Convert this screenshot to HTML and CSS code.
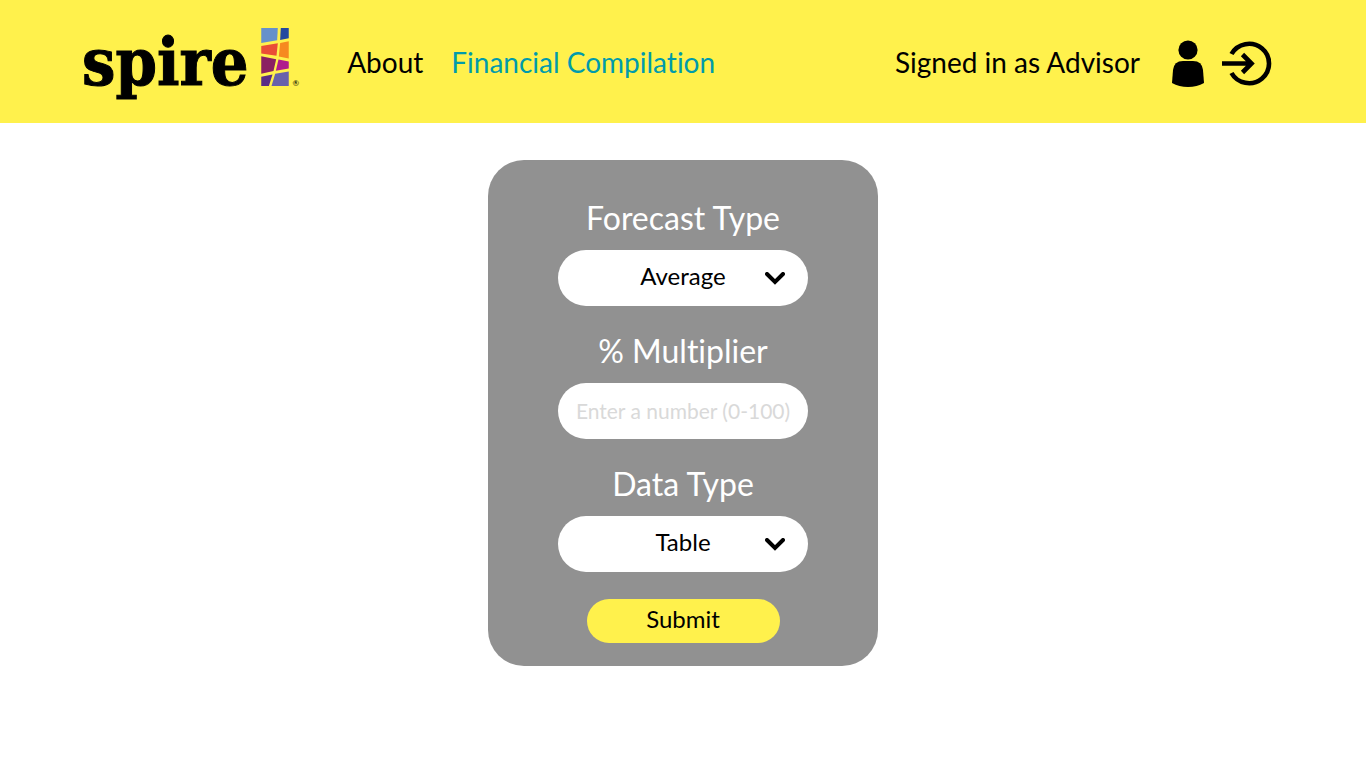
FILE: index.html
```html
<!DOCTYPE html>
<html lang="en">
<head>
<meta charset="utf-8">
<title>Spire – Financial Compilation</title>
<link rel="stylesheet" href="styles.css">
</head>
<body>
<header class="topbar">
  <a class="logo" href="#">
    <span class="logo-word">spire</span>
    <svg class="logo-art" viewBox="0 0 83 175" aria-hidden="true">
      <path fill="#6691cb" d="M0 0H50L48 37 0 45Z"/>
      <path fill="#23489f" d="M59 0H83V31L57 36Z"/>
      <path fill="#ea4e36" d="M0 54 50 46 46 84 0 77Z"/>
      <path fill="#f68a20" d="M57 45 83 40V92L53 86Z"/>
      <path fill="#8b2062" d="M0 85 45 94 37 130 0 138Z"/>
      <path fill="#b01c8c" d="M52 95 83 101V122L44 129Z"/>
      <path fill="#5a2d86" d="M0 147 34 140 23 175H0Z"/>
      <path fill="#6862ab" d="M42 138 83 131V175H31Z"/>
    </svg>
    <span class="logo-mark">®</span>
  </a>
  <nav class="nav">
    <a href="#">About</a>
    <a class="current" href="#" aria-current="page">Financial Compilation</a>
  </nav>
  <div class="account">
    <span class="signed">Signed in as Advisor</span>
    <a class="icon-link" href="#" aria-label="Profile">
      <svg width="32" height="50" viewBox="0 -3 32 50"><circle cx="16" cy="10" r="9.6"/><path d="M11 21H21Q30 21 31 30L32 43Q25 47 16 47T0 43L1 30Q2 21 11 21Z"/></svg>
    </a>
    <a class="icon-link" href="#" aria-label="Sign out">
      <svg width="50" height="48" viewBox="0 -3 50 48" fill="none" stroke="#000" stroke-width="4.6"><path d="M9.500 13A20 19.700 0 1 1 9.500 32"/><path d="M0 22.500H29M20.500 13.500 29.500 22.500 20.500 31.500"/></svg>
    </a>
  </div>
</header>
<main>
  <form class="card">
    <div class="field">
      <label for="forecast">Forecast Type</label>
      <div class="picker">
        <select id="forecast" class="control"><option>Average</option></select>
        <svg class="chevron" viewBox="0 0 20 13" aria-hidden="true"><path d="M2 2 10 10 18 2"/></svg>
      </div>
    </div>
    <div class="field">
      <label for="multiplier">% Multiplier</label>
      <input id="multiplier" class="control" type="text" inputmode="numeric" placeholder="Enter a number (0-100)">
    </div>
    <div class="field">
      <label for="data">Data Type</label>
      <div class="picker">
        <select id="data" class="control"><option>Table</option></select>
        <svg class="chevron" viewBox="0 0 20 13" aria-hidden="true"><path d="M2 2 10 10 18 2"/></svg>
      </div>
    </div>
    <button class="submit" type="submit">Submit</button>
  </form>
</main>
</body>
</html>
```
FILE: styles.css
```css
* {
  box-sizing: border-box;
}

body {
  margin: 0;
  background: #fff;
  color: #000;
  font-family: Lato, "Open Sans", sans-serif;
  font-variant-ligatures: none;
}

a {
  color: inherit;
  text-decoration: none;
}

.topbar {
  display: flex;
  align-items: center;
  min-height: 123px;
  padding: 0 94px 0 82px;
  background: #fff14c;
  font-size: 28px;
  line-height: 36px;
}

.logo {
  display: flex;
  align-items: flex-start;
}

.logo-word {
  font: bold 66px/70px "DejaVu Serif Condensed", "DejaVu Serif", serif;
  -webkit-text-stroke: 1px #000;
}

.logo-art {
  width: 28px;
  height: 58px;
  margin: 1px 4px 0 12px;
}

.logo-mark {
  margin-top: 52px;
  font-size: 8px;
  line-height: 8px;
}

.nav {
  display: flex;
  gap: 28px;
  margin-left: 48px;
}

.current {
  color: #009bab;
}

.account {
  display: flex;
  align-items: center;
  gap: 18px;
  margin-left: auto;
}

.signed {
  margin-right: 14px;
}

.icon-link,
.icon-link svg {
  display: block;
}

.card {
  display: flex;
  flex-direction: column;
  align-items: center;
  gap: 27px;
  width: 390px;
  max-width: 100%;
  margin: 37px auto;
  padding: 40px 24px 23px;
  border-radius: 36px;
  background: #919191;
}

.field {
  display: flex;
  flex-direction: column;
  gap: 14px;
  width: 250px;
}

.field label {
  color: #fff;
  font-size: 32px;
  line-height: 36px;
  text-align: center;
}

.picker {
  position: relative;
}

.control {
  display: block;
  width: 100%;
  height: 56px;
  padding: 0 12px 4px;
  border: 0;
  border-radius: 28px;
  appearance: none;
  background: #fff;
  color: #000;
  font: 24px/32px Lato, "Open Sans", sans-serif;
  text-align: center;
  text-align-last: center;
}

.control::placeholder {
  color: #d9d9d9;
  font-size: 21px;
  opacity: 1;
}

.chevron {
  position: absolute;
  top: 22px;
  right: 23px;
  width: 20px;
  height: 13px;
  fill: none;
  stroke: #000;
  stroke-width: 4;
  stroke-linecap: round;
  pointer-events: none;
}

.submit {
  width: 193px;
  height: 44px;
  padding: 0 0 4px;
  border: 0;
  border-radius: 22px;
  background: #fff14c;
  color: #000;
  font: 24px/32px Lato, "Open Sans", sans-serif;
}
```
